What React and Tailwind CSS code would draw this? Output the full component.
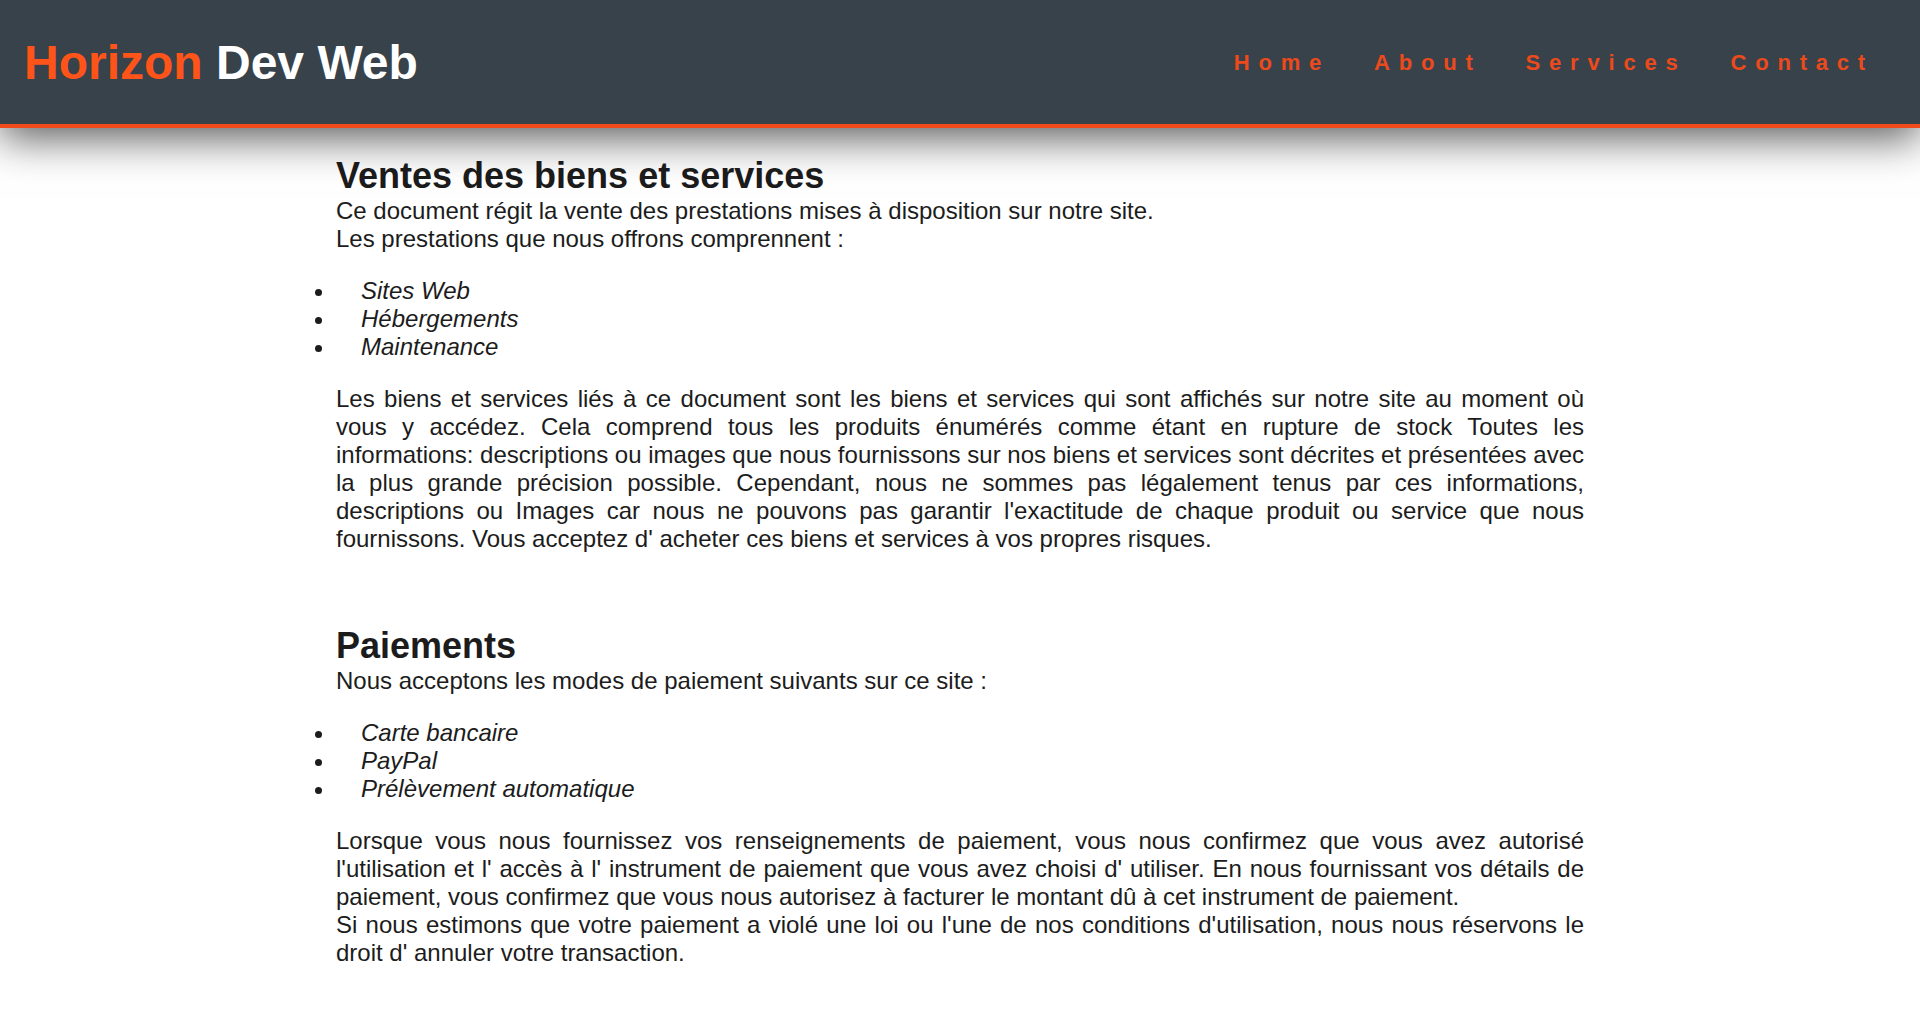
import React from "react";

const font = "font-['Liberation_Sans',Arial,sans-serif]";

function Bullets({ items }) {
  return (
    <ul className="my-6 -ml-[21px]">
      {items.map((item) => (
        <li key={item}>
          <span className="mr-[39px] inline-block h-[7px] w-[7px] rounded-full bg-[#1c1c1c] align-middle" />
          <em>{item}</em>
        </li>
      ))}
    </ul>
  );
}

export default function App() {
  return (
    <div className={`min-h-screen bg-white text-[#1c1c1c] ${font}`}>
      {/* Header */}
      <header className="relative z-10 flex h-[128px] items-center justify-between border-b-4 border-[#f24b1b] bg-[#37424a] pl-6 pr-[46px] shadow-[0_10px_40px_rgba(0,0,0,0.65)]">
        <h1 className="text-[48px] font-bold leading-[normal]">
          <span className="text-[#fe5419]">Horizon</span>{" "}
          <span className="text-white">Dev Web</span>
        </h1>
        <nav className="flex gap-[44px]">
          {["Home", "About", "Services", "Contact"].map((link) => (
            <a
              key={link}
              href="#"
              className="text-[22px] font-bold tracking-[0.4em] text-[#ec4a1d]"
            >
              {link}
            </a>
          ))}
        </nav>
      </header>

      {/* Content */}
      <main className="mx-auto w-[65%] pt-[27px] pb-10 text-[24px] leading-[normal]">
        <section>
          <h2 className="text-[36px] font-bold leading-[normal]">Ventes des biens et services</h2>
          <p>
            Ce document régit la vente des prestations mises à disposition sur notre site.
            <br />
            Les prestations que nous offrons comprennent :
          </p>
          <Bullets items={["Sites Web", "Hébergements", "Maintenance"]} />
          <p className="text-justify">
            Les biens et services liés à ce document sont les biens et services qui sont affichés sur
            notre site au moment où vous y accédez. Cela comprend tous les produits énumérés comme
            étant en rupture de stock Toutes les informations: descriptions ou images que nous
            fournissons sur nos biens et services sont décrites et présentées avec la plus grande
            précision possible. Cependant, nous ne sommes pas légalement tenus par ces informations,
            descriptions ou Images car nous ne pouvons pas garantir l'exactitude de chaque produit ou
            service que nous fournissons. Vous acceptez d' acheter ces biens et services à vos propres
            risques.
          </p>
        </section>

        <section className="mt-[72px]">
          <h2 className="text-[36px] font-bold leading-[normal]">Paiements</h2>
          <p>Nous acceptons les modes de paiement suivants sur ce site :</p>
          <Bullets items={["Carte bancaire", "PayPal", "Prélèvement automatique"]} />
          <p className="text-justify">
            Lorsque vous nous fournissez vos renseignements de paiement, vous nous confirmez que vous
            avez autorisé l'utilisation et l' accès à l' instrument de paiement que vous avez choisi d'
            utiliser. En nous fournissant vos détails de paiement, vous confirmez que vous nous
            autorisez à facturer le montant dû à cet instrument de paiement.
            <br />
            Si nous estimons que votre paiement a violé une loi ou l'une de nos conditions
            d'utilisation, nous nous réservons le droit d' annuler votre transaction.
          </p>
        </section>
      </main>
    </div>
  );
}
